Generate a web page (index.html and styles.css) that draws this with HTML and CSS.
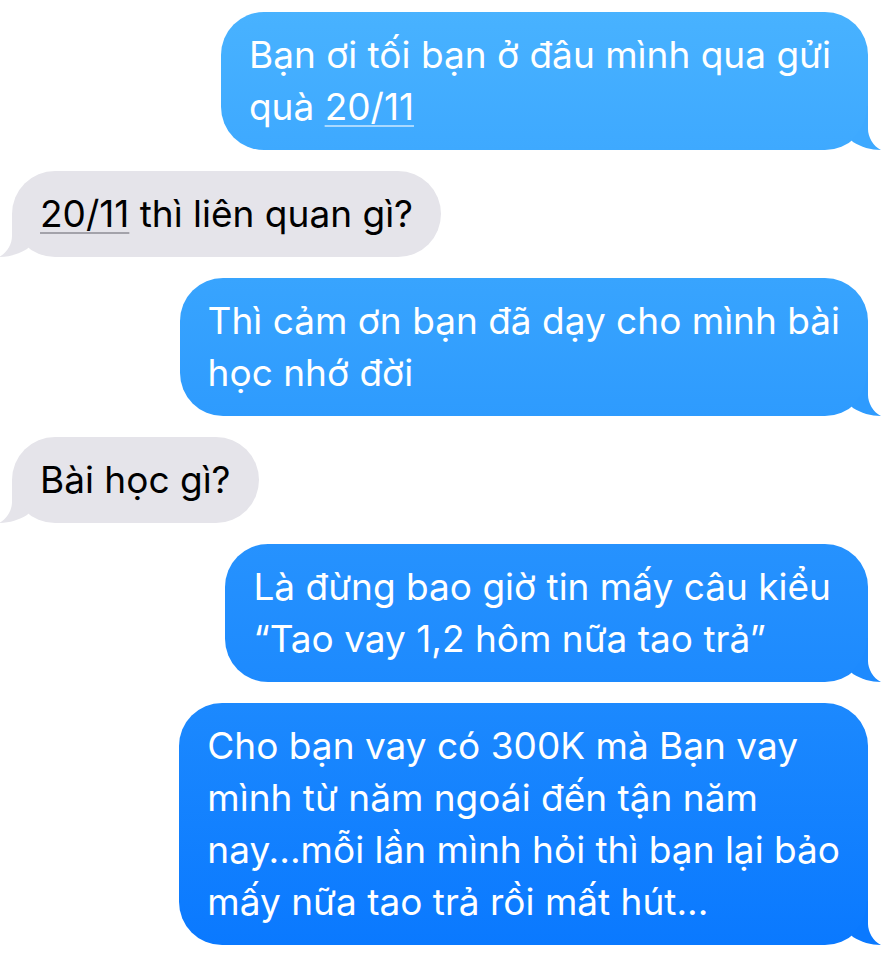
FILE: index.html
```html
<!DOCTYPE html>
<html lang="vi">
<head>
<meta charset="utf-8">
<meta name="viewport" content="width=device-width, initial-scale=1">
<title>Tin nhắn</title>
<link rel="stylesheet" href="styles.css">
</head>
<body>
<main class="thread">
  <p class="bubble sent roomy tone-1">Bạn ơi tối bạn ở đâu mình qua gửi<br>quà <a class="date" href="#">20/11</a>
    <svg class="tail" viewBox="0 0 30 46" aria-hidden="true"><path d="M17 2V25C17 33 22 42 30 46C20 46 10 43 2 38L0 36C10 28 16 16 16 2Z"/></svg></p>
  <p class="bubble received"><a class="date" href="#">20/11</a> thì liên quan gì?
    <svg class="tail" viewBox="0 0 30 46" aria-hidden="true"><path d="M17 2V25C17 33 22 42 30 46C20 46 10 43 2 38L0 36C10 28 16 16 16 2Z"/></svg></p>
  <p class="bubble sent tone-2">Thì cảm ơn bạn đã dạy cho mình bài<br>học nhớ đời
    <svg class="tail" viewBox="0 0 30 46" aria-hidden="true"><path d="M17 2V25C17 33 22 42 30 46C20 46 10 43 2 38L0 36C10 28 16 16 16 2Z"/></svg></p>
  <p class="bubble received">Bài học gì?
    <svg class="tail" viewBox="0 0 30 46" aria-hidden="true"><path d="M17 2V25C17 33 22 42 30 46C20 46 10 43 2 38L0 36C10 28 16 16 16 2Z"/></svg></p>
  <p class="bubble sent roomy tone-3">Là đừng bao giờ tin mấy câu kiểu<br>“Tao vay 1,2 hôm nữa tao trả”
    <svg class="tail" viewBox="0 0 30 46" aria-hidden="true"><path d="M17 2V25C17 33 22 42 30 46C20 46 10 43 2 38L0 36C10 28 16 16 16 2Z"/></svg></p>
  <p class="bubble sent tone-4">Cho bạn vay có 300K mà Bạn vay<br>mình từ năm ngoái đến tận năm<br>nay...mỗi lần mình hỏi thì bạn lại bảo<br>mấy nữa tao trả rồi mất hút...
    <svg class="tail" viewBox="0 0 30 46" aria-hidden="true"><path d="M17 2V25C17 33 22 42 30 46C20 46 10 43 2 38L0 36C10 28 16 16 16 2Z"/></svg></p>
</main>
</body>
</html>
```
FILE: styles.css
```css
* { box-sizing: border-box; }

body {
  margin: 0;
  background: #fff;
  font-family: Inter, "Liberation Sans", sans-serif;
  font-size: 37px;
  line-height: 52px;
}

.thread {
  display: flex;
  flex-direction: column;
  gap: 21px;
  padding: 12px 20px 14px 12px;
}

.bubble {
  --edge: #e5e4ea;
  position: relative;
  margin: 0;
  padding: 17px 28px;
  border-radius: 43px;
  white-space: nowrap;
}

.received {
  align-self: flex-start;
  background: #e5e4ea;
  color: #000;
}

.sent {
  align-self: flex-end;
  background: linear-gradient(var(--start), var(--edge));
  color: #fff;
}

.roomy { padding-right: 37px; }

.tone-1 { --start: #48b2ff; --edge: #3ea9ff; }
.tone-2 { --start: #38a4fe; --edge: #2e9bfe; }
.tone-3 { --start: #2692fe; --edge: #1d8afe; }
.tone-4 { --start: #1c89fe; --edge: #0a79ff; }

.date {
  color: inherit;
  text-decoration: underline;
  text-decoration-thickness: 2px;
  text-underline-offset: 5px;
}

.sent .date { text-decoration-color: #a9d9ff; }
.received .date { text-decoration-color: #a3a2aa; }

.tail {
  position: absolute;
  right: -13px;
  bottom: 0;
  width: 30px;
  height: 46px;
  fill: var(--edge);
}

.received .tail {
  right: auto;
  left: -13px;
  transform: scaleX(-1);
}
```
